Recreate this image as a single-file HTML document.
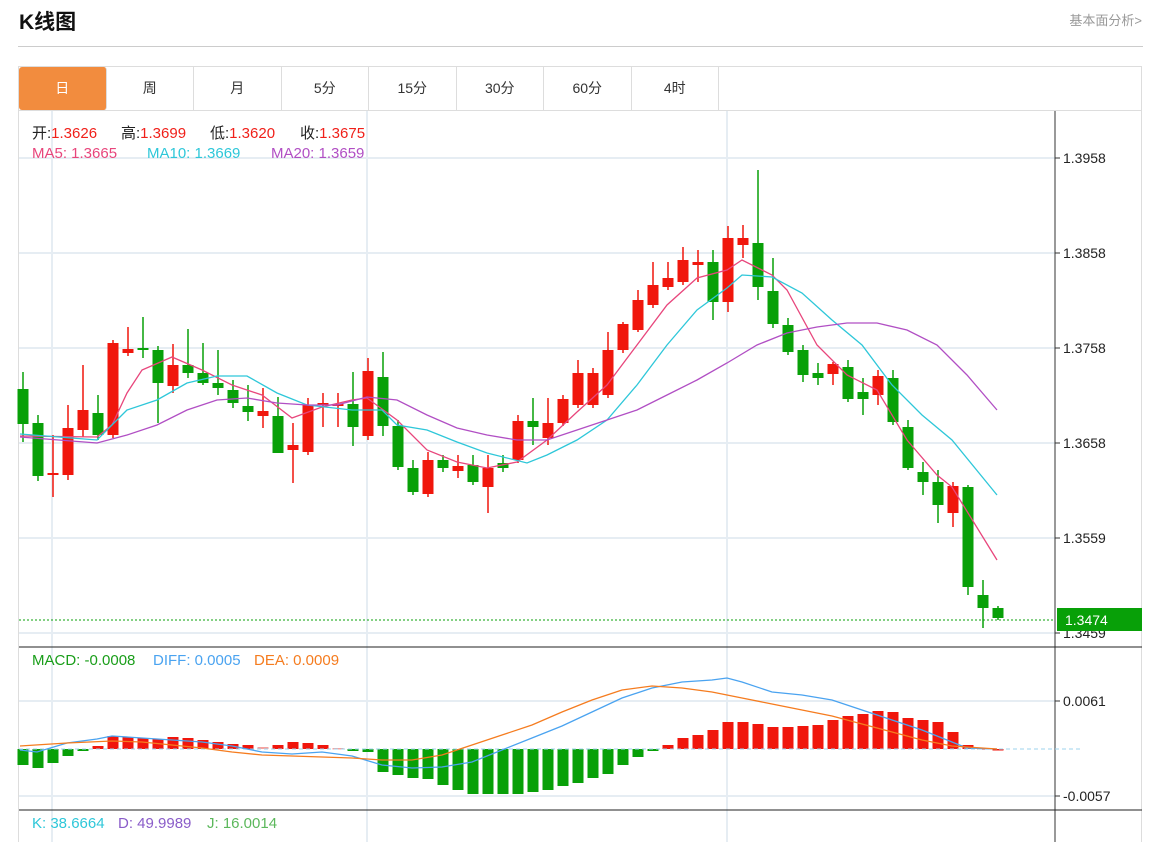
<!DOCTYPE html>
<html><head><meta charset="utf-8"><style>
body{margin:0;width:1150px;height:842px;overflow:hidden;background:#fff;font-family:"Liberation Sans","Noto Sans CJK SC",sans-serif;position:relative}
.t{position:absolute;left:19px;top:6px;font-size:21px;font-weight:bold;color:#111}
.r{position:absolute;right:8px;top:10px;font-size:13px;color:#999}
.hl{position:absolute;left:18px;top:46px;width:1125px;height:1px;background:#ccc}
.box{position:absolute;left:18px;top:66px;width:1124px;height:776px;border:1px solid #ddd;border-bottom:none;box-sizing:border-box}
.tabs{position:absolute;left:19px;top:67px;height:43px;display:flex}
.tab{width:87.5px;height:43px;border-right:1px solid #ddd;box-sizing:border-box;text-align:center;line-height:43px;font-size:14px;color:#333}
.tab.a{background:#f28c3e;color:#fff;border-radius:3px}
.tb{position:absolute;left:19px;top:110px;width:1123px;height:1px;background:#ddd}
.lg{position:absolute;font-size:15px;white-space:pre}
svg{position:absolute;left:0;top:0}
</style></head><body>
<div class="t">K线图</div>
<div class="r">基本面分析&gt;</div>
<div class="hl"></div>
<div class="box"></div>
<div class="tabs"><div class="tab a">日</div><div class="tab">周</div><div class="tab">月</div><div class="tab">5分</div><div class="tab">15分</div><div class="tab">30分</div><div class="tab">60分</div><div class="tab">4时</div></div>
<div class="tb"></div>
<svg id="s" width="1150" height="842"></svg>
<div class="lg" style="left:32px;top:122px;color:#222">开:<span style="color:#f0201a">1.3626</span></div>
<div class="lg" style="left:121px;top:122px;color:#222">高:<span style="color:#f0201a">1.3699</span></div>
<div class="lg" style="left:210px;top:122px;color:#222">低:<span style="color:#f0201a">1.3620</span></div>
<div class="lg" style="left:300px;top:122px;color:#222">收:<span style="color:#f0201a">1.3675</span></div>
<div class="lg" style="left:32px;top:145px;color:#e8467c">MA5: 1.3665</div>
<div class="lg" style="left:147px;top:145px;color:#2ec7d9">MA10: 1.3669</div>
<div class="lg" style="left:271px;top:145px;color:#b14fc4">MA20: 1.3659</div>
<div class="lg" style="left:32px;top:652px;color:#1a9e1a">MACD: -0.0008</div>
<div class="lg" style="left:153px;top:652px;color:#4aa3f0">DIFF: 0.0005</div>
<div class="lg" style="left:254px;top:652px;color:#f57c1f">DEA: 0.0009</div>
<div class="lg" style="left:32px;top:815px;color:#2ec7d9">K: 38.6664</div>
<div class="lg" style="left:118px;top:815px;color:#8a5cc9">D: 49.9989</div>
<div class="lg" style="left:207px;top:815px;color:#5cb85c">J: 16.0014</div>
<script>
var s=document.getElementById('s'),h='';
function L(x1,y1,x2,y2,c,w,d){h+='<line x1="'+x1+'" y1="'+y1+'" x2="'+x2+'" y2="'+y2+'" stroke="'+c+'" stroke-width="'+(w||1)+'"'+(d?' stroke-dasharray="'+d+'"':'')+'/>';}
var g='#e6edf3';
[158,253,348,443,538,633,701,796].forEach(function(y){L(19,y,1055,y,g,2)});
[52,367,727].forEach(function(x){L(x,111,x,842,g,2)});
L(1055,111,1055,842,'#333');L(19,647,1142,647,'#222');L(19,810,1142,810,'#222');
[[158,'1.3958'],[253,'1.3858'],[348,'1.3758'],[443,'1.3658'],[538,'1.3559'],[633,'1.3459'],[701,'0.0061'],[796,'-0.0057']].forEach(function(a){L(1055,a[0],1060,a[0],'#333');h+='<text x="1063" y="'+(a[0]+5)+'" font-size="14" fill="#222" font-family="Liberation Sans">'+a[1]+'</text>';});
var C=[[0,389,424,372,442],[0,423,476,415,481],[1,473,475,435,497],[1,428,475,405,480],[1,410,430,365,437],[0,413,435,395,440],[1,343,435,340,438],[1,349,353,327,356],[0,348,350,317,358],[0,350,383,346,423],[1,365,386,344,393],[0,365,373,329,378],[0,373,383,343,385],[0,383,388,350,395],[0,390,403,380,408],[0,406,412,385,421],[1,411,416,388,428],[0,416,453,397,453],[1,445,450,423,483],[1,405,452,398,455],[1,403,405,393,427],[1,404,406,393,427],[0,404,427,372,446],[1,371,436,358,440],[0,377,426,352,436],[0,426,467,420,470],[0,468,492,460,495],[1,460,494,452,497],[0,460,468,455,472],[1,466,471,455,478],[0,465,482,455,485],[1,468,487,455,513],[0,463,468,455,472],[1,421,460,415,463],[0,421,427,398,445],[1,423,438,398,445],[1,399,423,395,426],[1,373,405,360,408],[1,373,405,368,408],[1,350,395,332,398],[1,324,350,322,353],[1,300,330,290,332],[1,285,305,262,308],[1,278,287,262,290],[1,260,282,247,285],[1,262,265,250,282],[0,262,302,250,320],[1,238,302,226,312],[1,238,245,225,258],[0,243,287,170,300],[0,291,324,258,328],[0,325,352,318,355],[0,350,375,345,382],[0,373,378,363,385],[1,364,374,362,385],[0,367,399,360,402],[0,392,399,378,415],[1,376,395,370,405],[0,378,422,370,425],[0,427,468,420,470],[0,472,482,462,495],[0,482,505,470,523],[1,486,513,482,527],[0,487,587,485,595],[0,595,608,580,628],[0,608,618,606,620]];
C.forEach(function(c,i){var x=23+15*i,col=c[0]?'#f0160c':'#08a008';L(x,c[3],x,c[4],col,1.5);h+='<rect x="'+(x-5.5)+'" y="'+c[1]+'" width="11" height="'+Math.max(2,c[2]-c[1])+'" fill="'+col+'"/>';});
var M=[765,768,763,756,751,746,736,737,738,739,737,738,740,742,744,745,747,745,742,743,745,748,751,752,772,775,778,779,785,790,794,794,794,794,792,790,786,783,778,774,765,757,751,745,738,735,730,722,722,724,727,727,726,725,720,716,714,711,712,718,720,722,732,745,748,749];
M.forEach(function(y,i){var x=23+15*i,col=y>749?'#08a008':'#f0160c';if(i==16||i==21)col='#f5a3a0';h+='<rect x="'+(x-5.5)+'" y="'+Math.min(y,749)+'" width="11" height="'+Math.max(1.5,Math.abs(y-749))+'" fill="'+col+'"/>';});
L(19,749,1080,749,'#9cd3ee',1,'4 3');
function P(pts,c){h+='<polyline fill="none" stroke="'+c+'" stroke-width="1.3" points="'+pts+'"/>';}
P('20,436 97,437 112,425 127,393 142,370 172,357 202,370 232,385 262,395 292,418 322,407 352,400 367,398 397,420 427,450 457,462 487,468 517,462 547,440 577,412 607,385 637,345 667,305 697,278 727,270 742,260 772,275 787,290 817,345 847,375 877,390 907,440 937,475 952,487 997,560','#e8467c');
P('20,434 97,440 127,410 157,400 187,383 217,376 247,376 277,393 307,405 352,410 382,410 397,425 427,430 457,442 487,453 527,463 547,455 577,440 607,420 637,385 667,345 697,310 727,288 742,275 772,277 802,293 832,320 862,345 892,385 922,415 952,440 997,495','#2ec7d9');
P('20,437 97,443 127,435 157,425 187,410 217,400 247,398 277,403 307,405 337,405 367,397 397,400 427,415 457,428 487,435 517,440 547,440 577,430 607,420 637,410 667,395 697,380 727,363 757,345 787,333 817,327 847,323 877,323 907,330 937,345 967,375 997,410','#b14fc4');
P('20,750 37,752 67,743 97,739 112,736 142,738 172,740 202,742 232,746 262,752 292,754 307,753 322,752 352,756 382,765 412,768 442,767 472,762 502,750 532,738 562,726 592,712 622,698 652,688 682,682 712,680 727,678 742,682 772,692 802,695 832,700 862,710 892,720 922,730 952,742 967,748 997,749','#4aa3f0');
P('20,746 67,743 112,741 142,742 172,745 202,748 232,752 262,755 292,756 322,757 352,758 382,760 412,760 442,755 472,745 502,735 532,725 562,712 592,700 622,690 652,686 682,688 712,692 742,698 772,704 802,710 832,716 862,724 892,732 922,740 952,746 997,749','#f57c1f');
L(19,620,1055,620,'#08a008',1,'2 2');
h+='<rect x="1057" y="608" width="85" height="23" fill="#08a008"/><text x="1065" y="625" font-size="14" fill="#fff" font-family="Liberation Sans">1.3474</text>';
s.innerHTML=h;
</script>
</body></html>
